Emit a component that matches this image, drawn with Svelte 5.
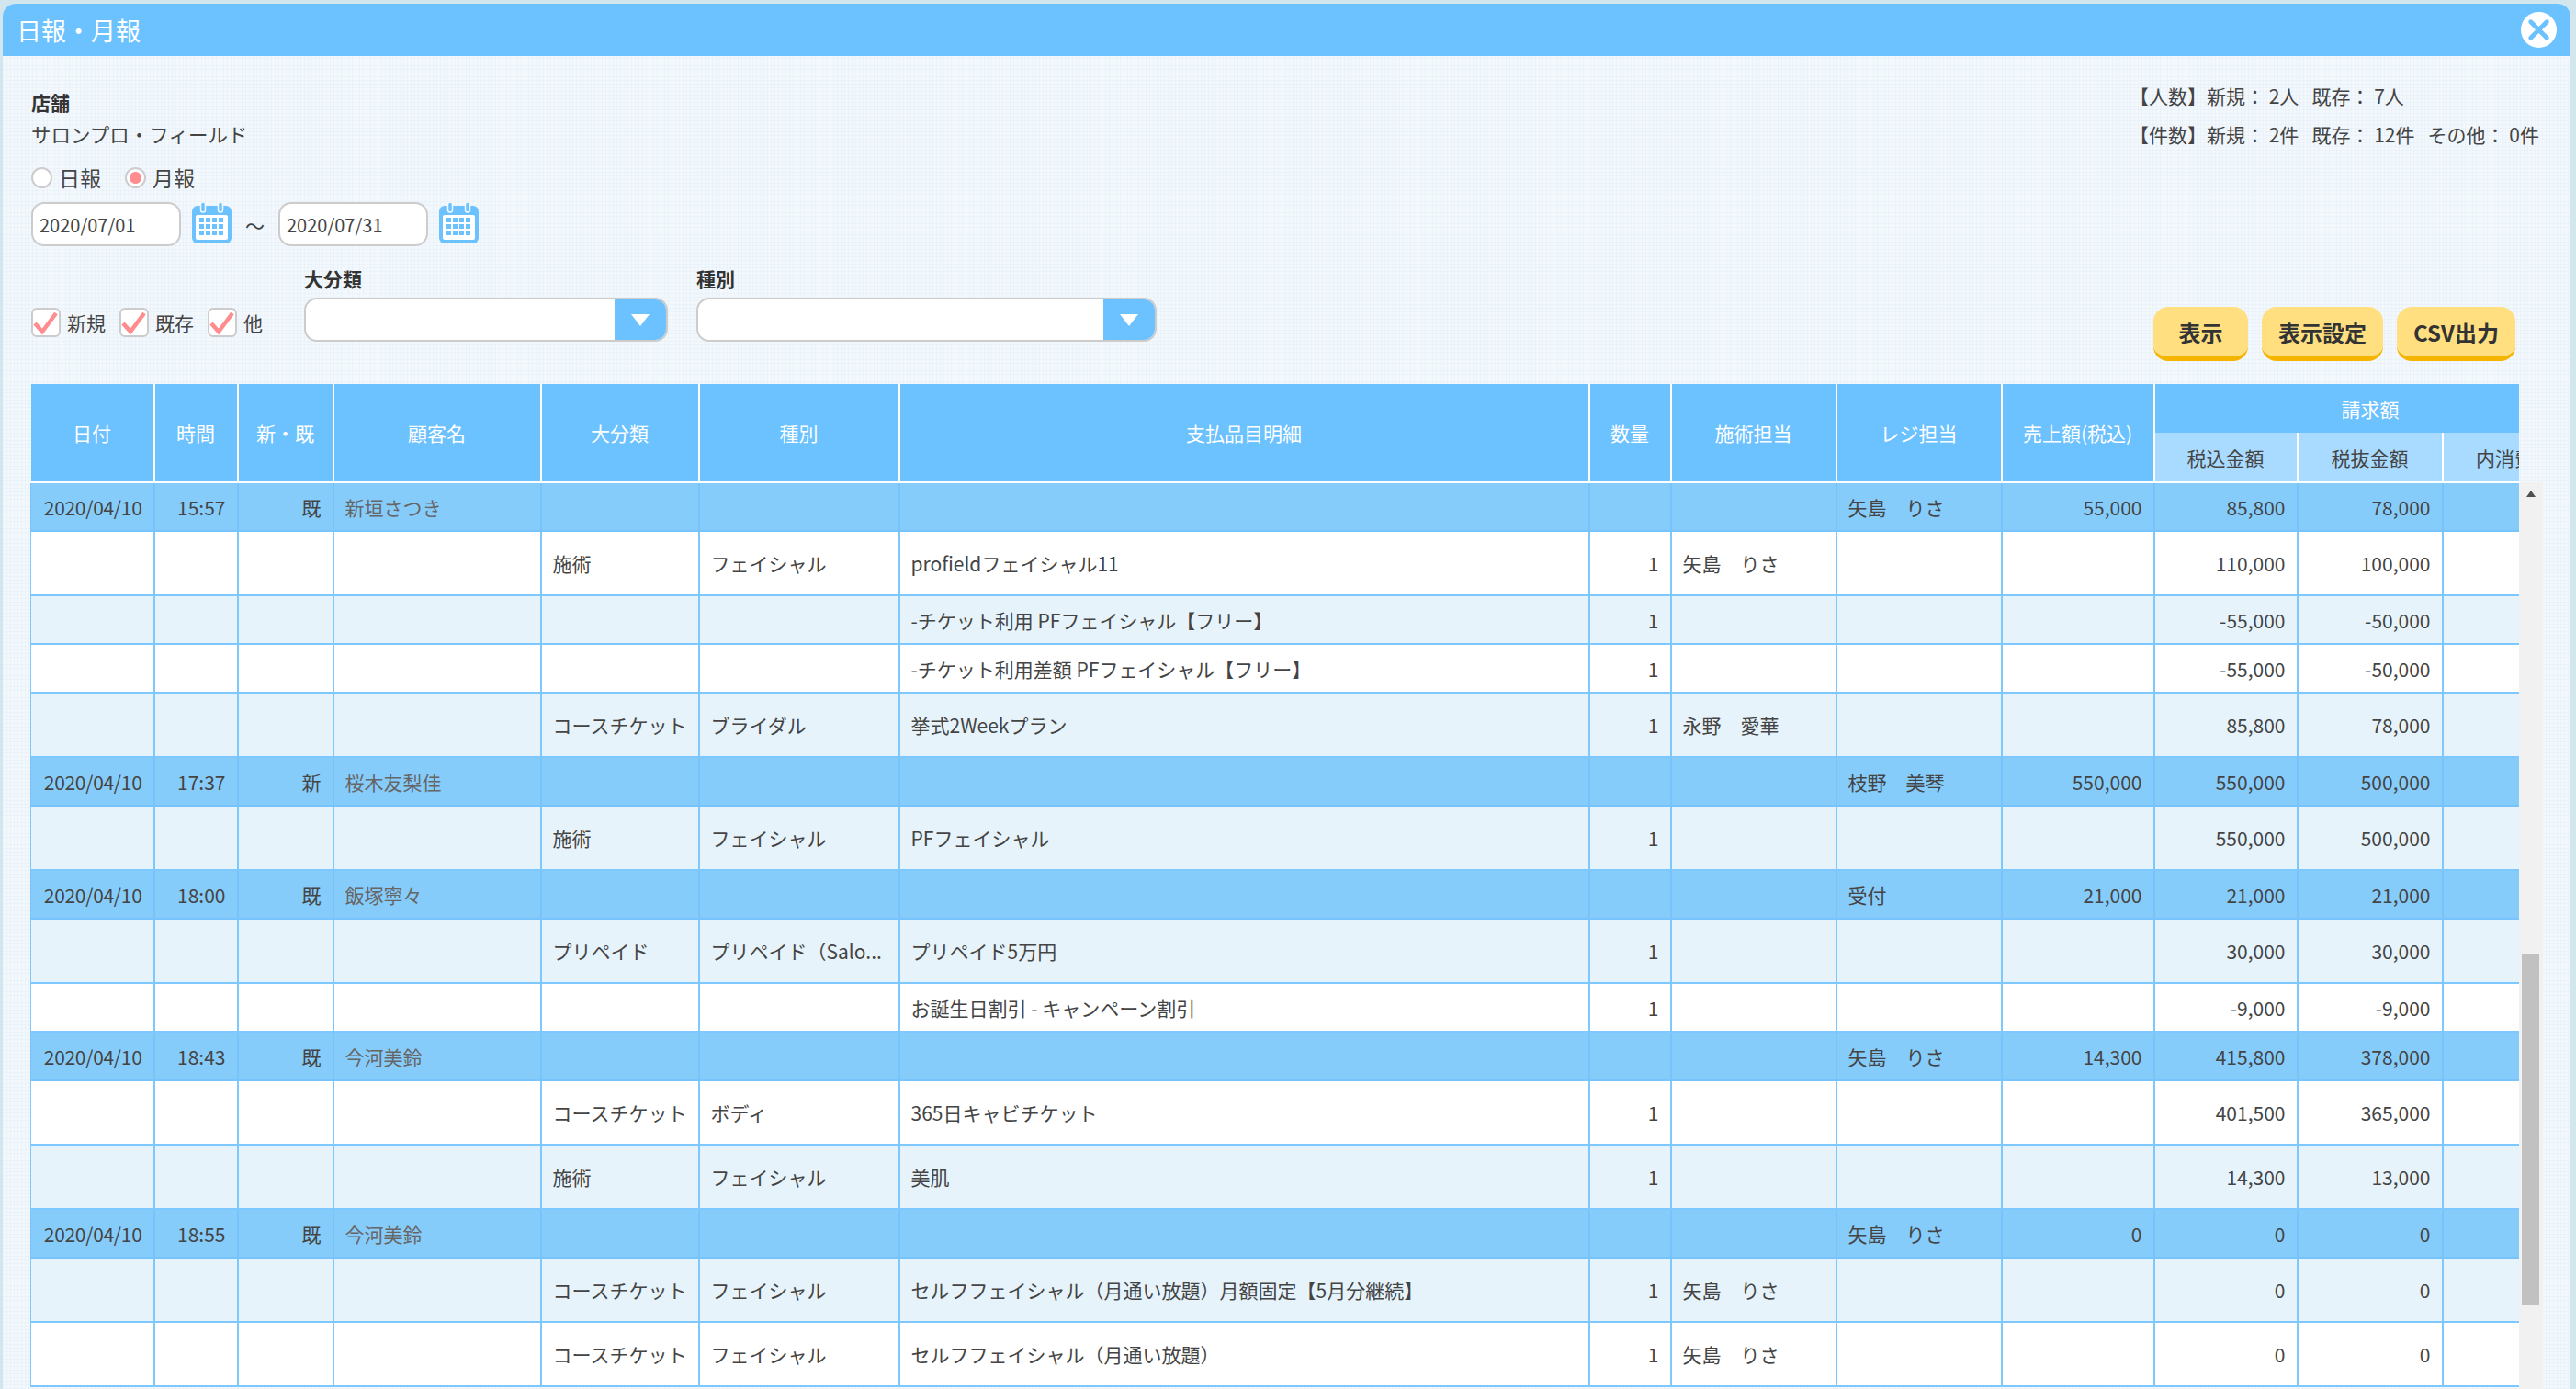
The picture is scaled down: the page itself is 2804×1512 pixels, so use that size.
<script>
  const cols = [134, 91, 104, 226, 172, 218, 751, 89, 180, 180, 166, 156, 158, 157];

  // kind: g = customer row, t = tall row, s = short row
  const rows = [
    { kind: 'g', date: '2020/04/10', time: '15:57', type: '既', name: '新垣さつき', reg: '矢島　りさ', sales: '55,000', inc: '85,800', exc: '78,000' },
    { kind: 't', cat: '施術', sub: 'フェイシャル', item: 'profieldフェイシャル11', qty: '1', staff: '矢島　りさ', inc: '110,000', exc: '100,000' },
    { kind: 's', item: '-チケット利用 PFフェイシャル【フリー】', qty: '1', inc: '-55,000', exc: '-50,000' },
    { kind: 's', item: '-チケット利用差額 PFフェイシャル【フリー】', qty: '1', inc: '-55,000', exc: '-50,000' },
    { kind: 't', cat: 'コースチケット', sub: 'ブライダル', item: '挙式2Weekプラン', qty: '1', staff: '永野　愛華', inc: '85,800', exc: '78,000' },
    { kind: 'g', date: '2020/04/10', time: '17:37', type: '新', name: '桜木友梨佳', reg: '枝野　美琴', sales: '550,000', inc: '550,000', exc: '500,000' },
    { kind: 't', cat: '施術', sub: 'フェイシャル', item: 'PFフェイシャル', qty: '1', inc: '550,000', exc: '500,000' },
    { kind: 'g', date: '2020/04/10', time: '18:00', type: '既', name: '飯塚寧々', reg: '受付', sales: '21,000', inc: '21,000', exc: '21,000' },
    { kind: 't', cat: 'プリペイド', sub: 'プリペイド（Salo...', item: 'プリペイド5万円', qty: '1', inc: '30,000', exc: '30,000' },
    { kind: 's', item: 'お誕生日割引 - キャンペーン割引', qty: '1', inc: '-9,000', exc: '-9,000' },
    { kind: 'g', date: '2020/04/10', time: '18:43', type: '既', name: '今河美鈴', reg: '矢島　りさ', sales: '14,300', inc: '415,800', exc: '378,000' },
    { kind: 't', cat: 'コースチケット', sub: 'ボディ', item: '365日キャビチケット', qty: '1', inc: '401,500', exc: '365,000' },
    { kind: 't', cat: '施術', sub: 'フェイシャル', item: '美肌', qty: '1', inc: '14,300', exc: '13,000' },
    { kind: 'g', date: '2020/04/10', time: '18:55', type: '既', name: '今河美鈴', reg: '矢島　りさ', sales: '0', inc: '0', exc: '0' },
    { kind: 't', cat: 'コースチケット', sub: 'フェイシャル', item: 'セルフフェイシャル（月通い放題）月額固定【5月分継続】', qty: '1', staff: '矢島　りさ', inc: '0', exc: '0' },
    { kind: 't', cat: 'コースチケット', sub: 'フェイシャル', item: 'セルフフェイシャル（月通い放題）', qty: '1', staff: '矢島　りさ', inc: '0', exc: '0' }
  ];

  const dates = ['2020/07/01', '2020/07/31'];
  const checks = ['新規', '既存', '他'];
</script>

<div class="modal">
  <header class="title">
    <span>日報・月報</span>
    <button class="close" aria-label="閉じる">
      <svg viewBox="0 0 40 40" width="39" height="39">
        <circle cx="20" cy="20" r="20" fill="#fff" />
        <path d="M11 11L29 29M29 11L11 29" stroke="#6cc1ff" stroke-width="5" stroke-linecap="round" />
      </svg>
    </button>
  </header>

  <div class="content">
    <div class="top">
      <div>
        <div class="label">店舗</div>
        <div class="store">サロンプロ・フィールド</div>
        <div class="radios">
          <label class="radio"><i></i>日報</label>
          <label class="radio on"><i></i>月報</label>
        </div>
        <div class="dates">
          {#each dates as d, i}
            {#if i > 0}<span class="tilde">～</span>{/if}
            <div class="date">{d}</div>
            <svg class="cal" viewBox="0 0 43 45" width="43" height="45">
              <path d="M6 4h31a6 6 0 0 1 6 6v29a6 6 0 0 1-6 6H6a6 6 0 0 1-6-6V10a6 6 0 0 1 6-6z" fill="#6cc1ff" />
              <rect x="4" y="14" width="35" height="27" rx="2" fill="#fff" />
              <rect x="9.5" y="0" width="5" height="11" rx="2.5" fill="#6cc1ff" stroke="#f3f8fc" stroke-width="1.5" />
              <rect x="28.5" y="0" width="5" height="11" rx="2.5" fill="#6cc1ff" stroke="#f3f8fc" stroke-width="1.5" />
              {#each [17, 24, 31] as y}
                {#each [8, 15, 22, 29] as x}
                  <rect {x} {y} width="5" height="5" fill="#6cc1ff" />
                {/each}
              {/each}
            </svg>
          {/each}
        </div>
      </div>
      <div class="summary">
        <div>【人数】新規： 2人&nbsp;&nbsp;&nbsp;既存： 7人</div>
        <div>【件数】新規： 2件&nbsp;&nbsp;&nbsp;既存： 12件&nbsp;&nbsp;&nbsp;その他： 0件</div>
      </div>
    </div>

    <div class="filters">
      <div class="checks">
        {#each checks as c}
          <label class="check">
            <span class="box">
              <svg viewBox="0 0 32 32" width="32" height="32">
                <path d="M4 17L12 26L27 6" fill="none" stroke="#ff8c8e" stroke-width="4.5" />
              </svg>
            </span>
            {c}
          </label>
        {/each}
      </div>
      <div class="field first">
        <div class="label">大分類</div>
        <div class="select"><span class="arrow"></span></div>
      </div>
      <div class="field second">
        <div class="label">種別</div>
        <div class="select"><span class="arrow"></span></div>
      </div>
      <div class="buttons">
        <button class="btn b1">表示</button>
        <button class="btn b2">表示設定</button>
        <button class="btn b3">CSV出力</button>
      </div>
    </div>

    <div class="grid-area">
      <div class="table-clip">
        <table>
          <colgroup>
            {#each cols as w}<col style="width:{w}px" />{/each}
          </colgroup>
          <thead>
            <tr>
              <th rowspan="2">日付</th>
              <th rowspan="2">時間</th>
              <th rowspan="2">新・既</th>
              <th rowspan="2">顧客名</th>
              <th rowspan="2">大分類</th>
              <th rowspan="2">種別</th>
              <th rowspan="2">支払品目明細</th>
              <th rowspan="2">数量</th>
              <th rowspan="2">施術担当</th>
              <th rowspan="2">レジ担当</th>
              <th rowspan="2">売上額(税込)</th>
              <th colspan="3" class="group-head">請求額</th>
            </tr>
            <tr>
              <th class="sub">税込金額</th>
              <th class="sub">税抜金額</th>
              <th class="sub">内消費税</th>
            </tr>
          </thead>
          <tbody>
            {#each rows as r}
              <tr class={r.kind}>
                <td class="num first-col">{r.date ?? ''}</td>
                <td class="num">{r.time ?? ''}</td>
                <td class="num">{r.type ?? ''}</td>
                <td class="name">{r.name ?? ''}</td>
                <td>{r.cat ?? ''}</td>
                <td>{r.sub ?? ''}</td>
                <td>{r.item ?? ''}</td>
                <td class="num">{r.qty ?? ''}</td>
                <td>{r.staff ?? ''}</td>
                <td>{r.reg ?? ''}</td>
                <td class="num">{r.sales ?? ''}</td>
                <td class="num">{r.inc ?? ''}</td>
                <td class="num">{r.exc ?? ''}</td>
                <td></td>
              </tr>
            {/each}
          </tbody>
        </table>
      </div>
      <div class="scrollbar">
        <span class="up"></span>
        <span class="thumb"></span>
      </div>
    </div>
  </div>
</div>

<style>
  :global(body) {
    background: #d2e6ee;
    height: 1512px;
    overflow: hidden;
    font-family: "Noto Sans CJK JP", "Noto Sans", sans-serif;
    color: #444;
    font-size: 21px;
  }

  .modal {
    margin: 4px 6px 0 3px;
    height: 1508px;
    border-radius: 14px 14px 0 0;
    overflow: hidden;
    background-color: #f3f8fc;
    background-image:
      repeating-linear-gradient(0deg, rgba(222, 234, 246, .35) 0 1px, transparent 1px 4px),
      repeating-linear-gradient(90deg, rgba(222, 234, 246, .35) 0 1px, transparent 1px 4px);
  }

  .title {
    height: 57px;
    background: #6cc1ff;
    color: #fff;
    font-size: 27px;
    line-height: 57px;
    padding: 0 15px 0 15px;
    display: flex;
    justify-content: space-between;
    align-items: center;
  }

  .close {
    border: 0;
    padding: 0;
    background: none;
    display: block;
    height: 39px;
  }

  .content { padding: 35px 29px 0 30px; }

  .top {
    display: flex;
    justify-content: space-between;
    align-items: flex-start;
    height: 192px;
    margin-left: 1px;
  }

  .label {
    font-weight: 700;
    line-height: 30px;
    color: #333;
  }

  .store {
    font-size: 21.5px;
    line-height: 39px;
    color: #444;
  }

  .radios {
    display: flex;
    gap: 26px;
    height: 34px;
    margin-top: 11px;
    align-items: center;
    font-size: 23px;
  }

  .radio {
    display: flex;
    align-items: center;
    gap: 7px;
  }

  .radio i {
    width: 23px;
    height: 23px;
    box-sizing: border-box;
    border-radius: 50%;
    border: 2px solid #ccc;
    background: #fff;
    display: block;
  }

  .radio.on i {
    background: radial-gradient(circle, #ff8c8e 0 6px, #fff 7px);
  }

  .dates {
    display: flex;
    align-items: flex-start;
    margin-top: 10px;
  }

  .date {
    width: 163px;
    height: 48px;
    box-sizing: border-box;
    border: 2px solid #ccc;
    border-radius: 14px;
    background: #fff;
    padding-left: 7px;
    line-height: 46px;
    font-size: 20px;
  }

  .cal { margin-left: 12px; }

  .tilde {
    width: 51px;
    text-align: center;
    line-height: 50px;
    font-size: 21px;
  }

  .summary {
    line-height: 42px;
    font-size: 21px;
    margin-top: -13px;
    width: 451px;
    white-space: nowrap;
  }

  .filters {
    display: flex;
    align-items: flex-start;
    height: 105px;
    margin-left: 1px;
  }

  .checks {
    display: flex;
    gap: 15px;
    margin-top: 47px;
    width: 297px;
  }

  .check {
    display: flex;
    align-items: center;
    gap: 7px;
    font-size: 21px;
  }

  .box {
    width: 32px;
    height: 32px;
    box-sizing: border-box;
    border: 2px solid #ccc;
    border-radius: 6px;
    background: #fff;
    display: block;
  }

  .box svg { display: block; margin: -2px; }

  .first { width: 396px; margin-right: 31px; }
  .second { width: 501px; }

  .field .label { margin-bottom: 6px; }

  .select {
    height: 48px;
    box-sizing: border-box;
    border: 2px solid #ccc;
    border-radius: 14px;
    background: #fff;
    overflow: hidden;
    display: flex;
    justify-content: flex-end;
  }

  .arrow {
    width: 56px;
    background: #6cc1ff;
    position: relative;
  }

  .arrow::after {
    content: "";
    position: absolute;
    left: 18px;
    top: 16px;
    border-left: 10px solid transparent;
    border-right: 10px solid transparent;
    border-top: 13px solid #fff;
  }

  .buttons {
    margin-left: auto;
    margin-right: 31px;
    margin-top: 46px;
    display: flex;
    gap: 15px;
  }

  .btn {
    height: 59px;
    box-sizing: border-box;
    border: 0;
    border-bottom: 5px solid #f5b400;
    border-radius: 16px;
    background: #ffdf80;
    font-family: inherit;
    font-size: 24px;
    font-weight: 700;
    color: #333;
    padding: 0;
  }

  .b1 { width: 103px; }
  .b2 { width: 132px; }
  .b3 { width: 129px; }

  .grid-area {
    display: flex;
    margin-top: 25px;
  }

  .table-clip {
    width: 2709px;
    overflow: hidden;
    flex: none;
  }

  table {
    table-layout: fixed;
    width: 2782px;
    border-collapse: collapse;
    border-spacing: 0;
  }

  th {
    background: #6cc1ff;
    color: #fff;
    font-weight: 400;
    font-size: 21px;
    height: 53px;
    padding: 0;
    border-right: 2px solid #fff;
    border-bottom: 2px solid #fff;
  }

  th.group-head { border-bottom: 0; }

  th.sub {
    background: #a8dbff;
    color: #444;
  }

  td {
    padding: 0 12px;
    border: 2px solid #7cc8ff;
    white-space: nowrap;
    overflow: hidden;
    font-size: 21px;
    color: #444;
  }

  td:first-child { border-left-width: 1px; }

  .first-col { letter-spacing: -.3px; }

  tbody tr.t { height: 69.9px; }
  tbody tr.s { height: 53.1px; }
  tbody tr.g { height: 53.1px; }

  tbody tr:nth-child(even) td { background: #fff; }
  tbody tr:nth-child(odd) td { background: #e6f3fb; }
  tbody tr.g td {
    background: #86ccfb;
    border-color: #76c4fb;
  }

  .num { text-align: right; }
  .name { color: #666; }

  .scrollbar {
    width: 26px;
    flex: none;
    margin-top: 107px;
    background: #f1f1f1;
    height: 1000px;
    position: relative;
  }

  .up {
    position: absolute;
    left: 8px;
    top: 9px;
    border-left: 5px solid transparent;
    border-right: 5px solid transparent;
    border-bottom: 7px solid #505050;
  }

  .thumb {
    position: absolute;
    left: 3px;
    top: 514px;
    width: 19px;
    height: 382px;
    background: #c1c1c1;
  }
</style>
